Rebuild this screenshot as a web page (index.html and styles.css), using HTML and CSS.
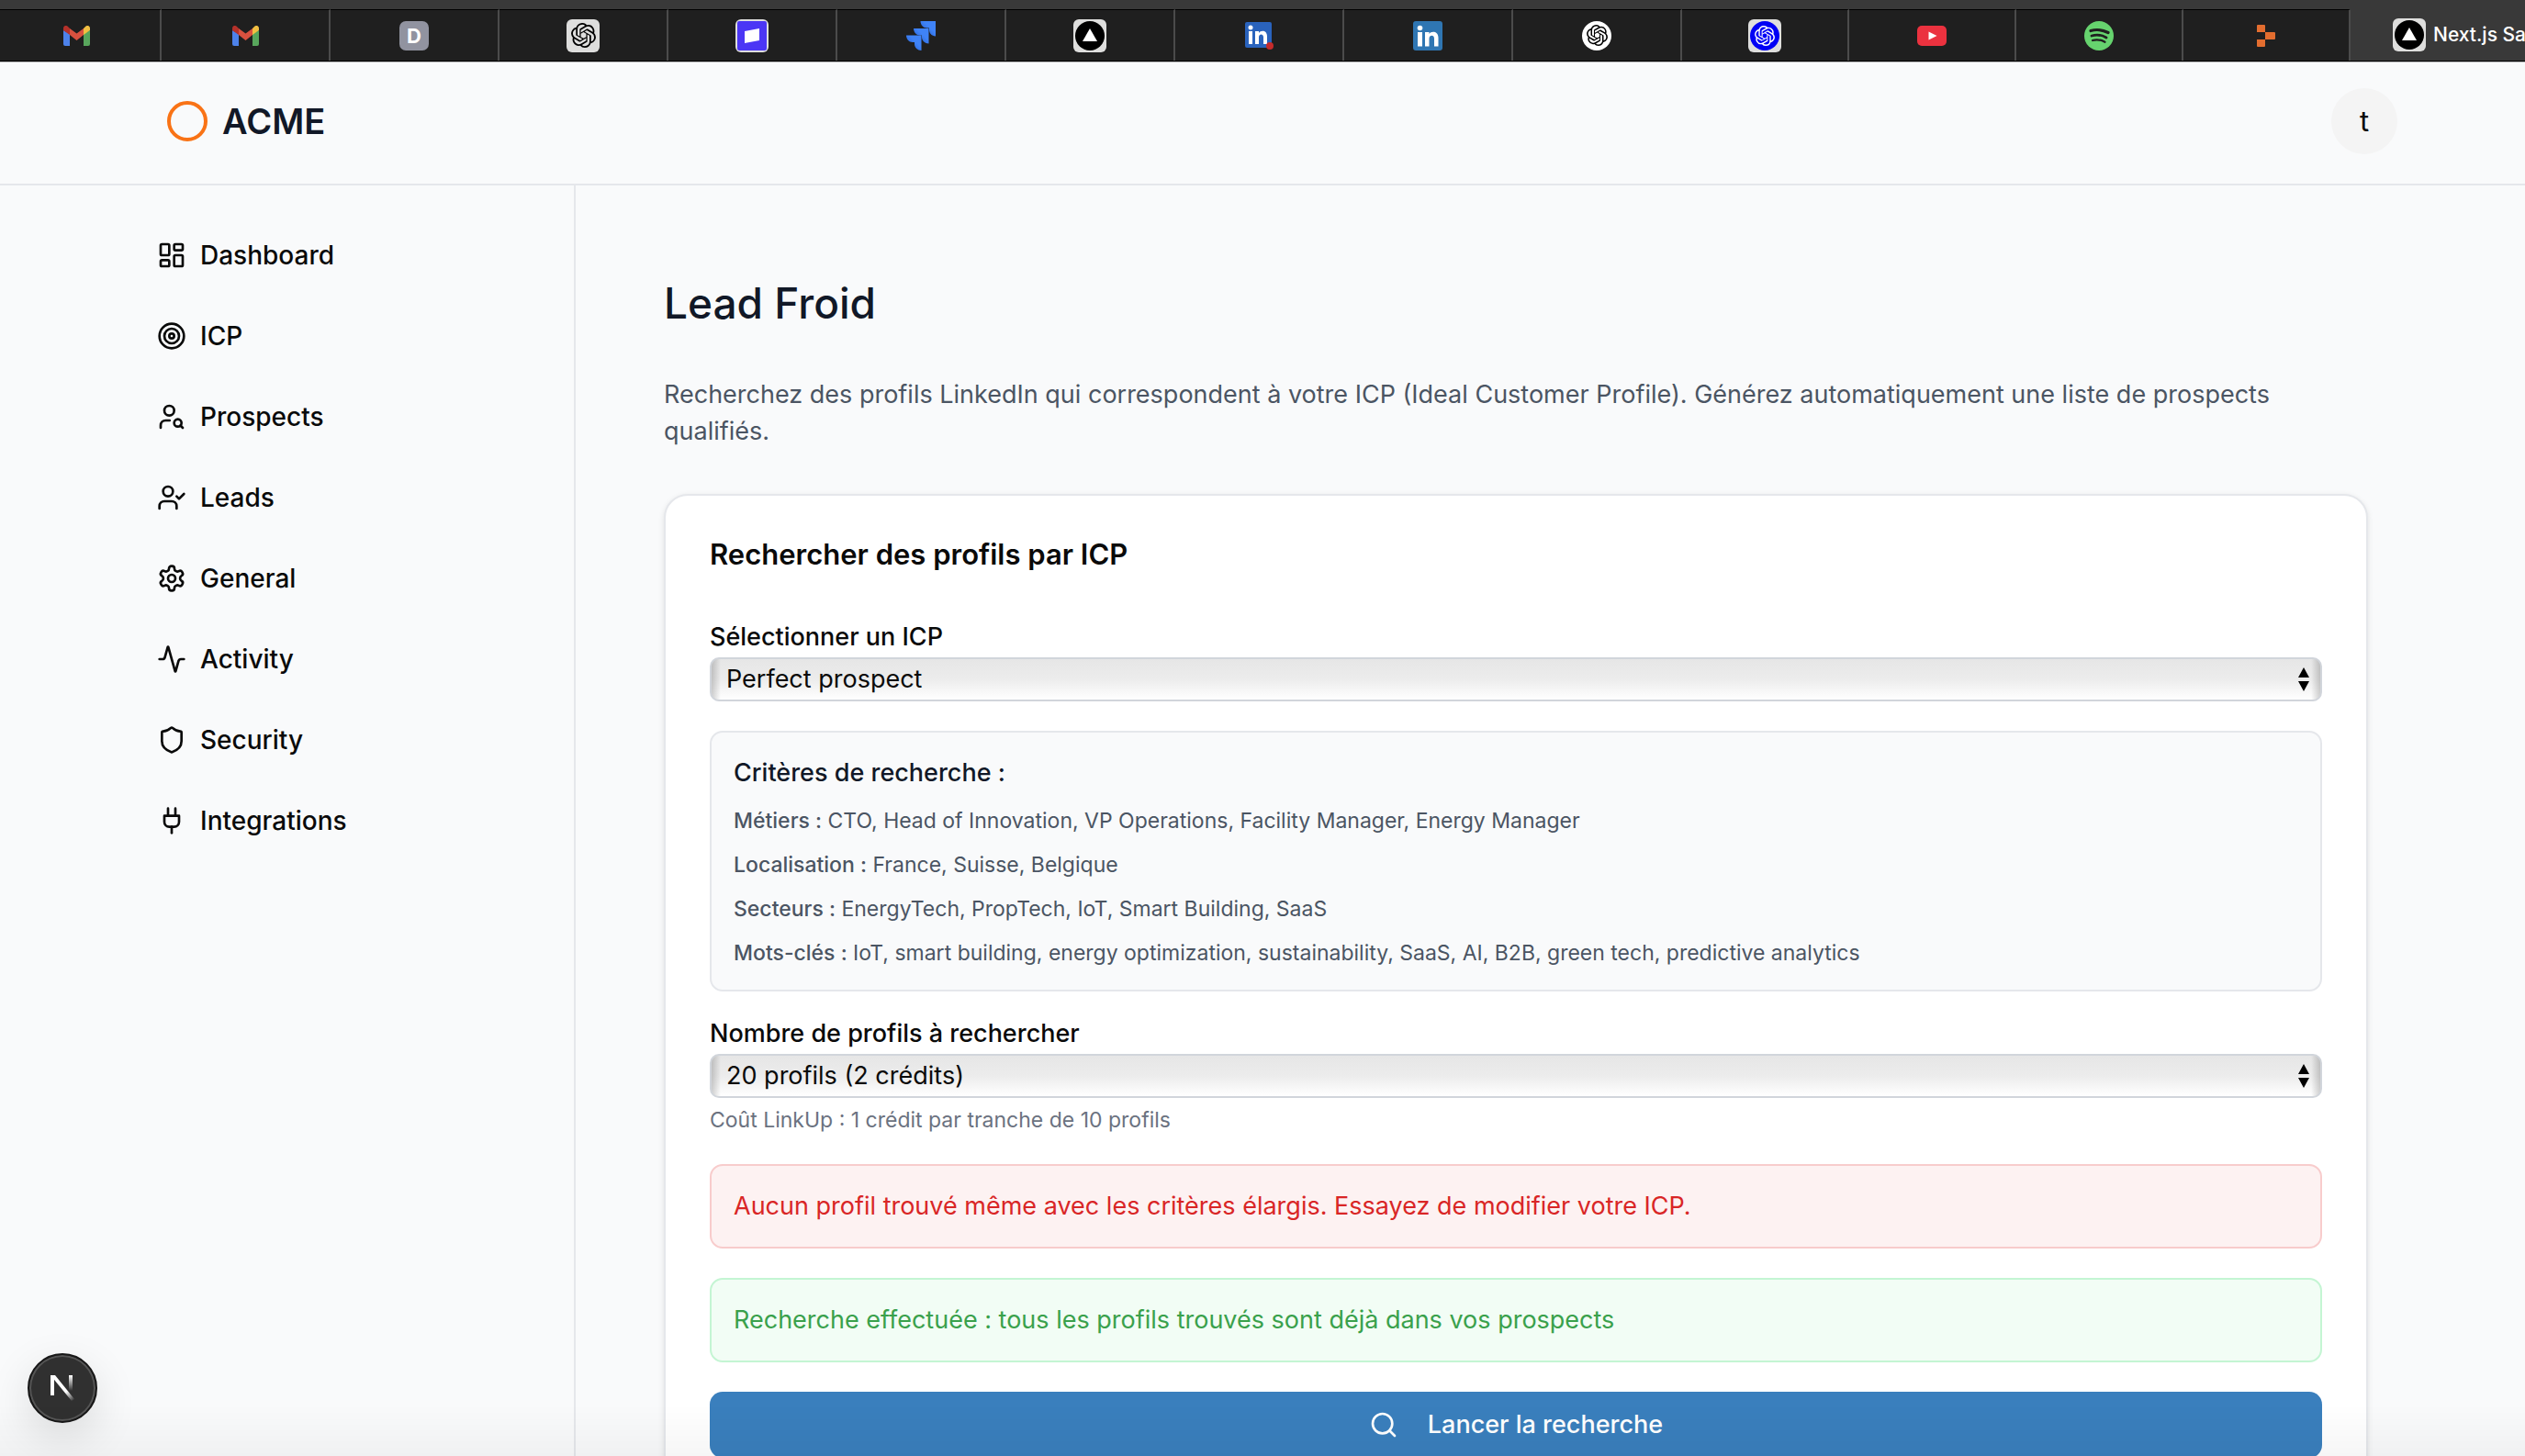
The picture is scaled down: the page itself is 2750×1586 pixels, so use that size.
FILE: index.html
```html
<!DOCTYPE html>
<html lang="fr">
<head>
<meta charset="utf-8">
<title>Lead Froid</title>
<meta name="viewport" content="width=device-width, initial-scale=1">
<link rel="stylesheet" href="styles.css">
</head>
<body>
<svg class="defs" aria-hidden="true">
  <defs>
    <symbol id="gmail" viewBox="0 0 29 22">
      <path fill="#4d82ea" d="M0 5v15a2 2 0 0 0 2 2h5V9z"/>
      <path fill="#58a65c" d="M29 5v15a2 2 0 0 1-2 2h-5V9z"/>
      <path fill="#f1bf42" d="M22 3v7l7-5V3c0-3-3-4-5-2z"/>
      <path fill="#b5312a" d="M7 3v7L0 5V3c0-3 3-4 5-2z"/>
      <path fill="#d9513f" d="M7 10V3l7.500 5.500L22 3v7l-7.500 6z"/>
    </symbol>
    <symbol id="knot" viewBox="0 0 24 24">
      <path fill="currentColor" d="M22.2819 9.8211a5.9847 5.9847 0 0 0-.5157-4.9108 6.0462 6.0462 0 0 0-6.5098-2.9A6.0651 6.0651 0 0 0 4.9807 4.1818a5.9847 5.9847 0 0 0-3.9977 2.9 6.0462 6.0462 0 0 0 .7427 7.0966 5.98 5.98 0 0 0 .511 4.9107 6.051 6.051 0 0 0 6.5146 2.9001A5.9847 5.9847 0 0 0 13.2599 24a6.0557 6.0557 0 0 0 5.7718-4.2058 5.9894 5.9894 0 0 0 3.9977-2.9001 6.0557 6.0557 0 0 0-.7475-7.0729zm-9.022 12.6081a4.4755 4.4755 0 0 1-2.8764-1.0408l.1419-.0804 4.7783-2.7582a.7948.7948 0 0 0 .3927-.6813v-6.7369l2.02 1.1686a.071.071 0 0 1 .038.052v5.5826a4.504 4.504 0 0 1-4.4945 4.4944zm-9.6607-4.1254a4.4708 4.4708 0 0 1-.5346-3.0137l.142.0852 4.783 2.7582a.7712.7712 0 0 0 .7806 0l5.8428-3.3685v2.3324a.0804.0804 0 0 1-.0332.0615L9.74 19.9502a4.4992 4.4992 0 0 1-6.1408-1.6464zM2.3408 7.8956a4.485 4.485 0 0 1 2.3655-1.9728V11.6a.7664.7664 0 0 0 .3879.6765l5.8144 3.3543-2.0201 1.1685a.0757.0757 0 0 1-.071 0l-4.8303-2.7865A4.504 4.504 0 0 1 2.3408 7.872zm16.5963 3.8558L13.1038 8.364 15.1192 7.2a.0757.0757 0 0 1 .071 0l4.8303 2.7913a4.4944 4.4944 0 0 1-.6765 8.1042v-5.6772a.79.79 0 0 0-.407-.667zm2.0107-3.0231l-.142-.0852-4.7735-2.7818a.7759.7759 0 0 0-.7854 0L9.409 9.2297V6.8974a.0662.0662 0 0 1 .0284-.0615l4.8303-2.7866a4.4992 4.4992 0 0 1 6.6802 4.66zM8.3065 12.863l-2.02-1.1638a.0804.0804 0 0 1-.038-.0567V6.0742a4.4992 4.4992 0 0 1 7.3757-3.4537l-.142.0805L8.704 5.459a.7948.7948 0 0 0-.3927.6813zm1.0976-2.3654l2.602-1.4998 2.6069 1.4998v2.9994l-2.5974 1.4997-2.6067-1.4997Z"/>
    </symbol>
    <symbol id="vercel" viewBox="0 0 36 36">
      <rect width="36" height="36" rx="6" fill="#dededd"/>
      <circle cx="18" cy="18" r="16" fill="#000"/>
      <path fill="#fff" d="M18 10l8 14H10z"/>
    </symbol>
    <linearGradient id="jira" x1="1" y1="0" x2="0" y2="1">
      <stop offset=".4" stop-color="#3f83f7"/><stop offset="1" stop-color="#1c54c8"/>
    </linearGradient>
    <linearGradient id="fade" x1="0" y1="0" x2="0" y2="1">
      <stop offset="0" stop-color="#fff"/><stop offset="1" stop-color="#fff" stop-opacity="0"/>
    </linearGradient>
    <linearGradient id="tail" gradientUnits="userSpaceOnUse" x1="17" y1="19" x2="25" y2="29">
      <stop offset="0" stop-color="#fff"/><stop offset="1" stop-color="#fff" stop-opacity="0"/>
    </linearGradient>
  </defs>
</svg>

<div class="browser">
  <div class="tabs">
    <div class="tab"><svg width="29" height="22"><use href="#gmail"/></svg></div>
    <div class="tab"><svg width="29" height="22"><use href="#gmail"/></svg></div>
    <div class="tab"><span class="letter">D</span></div>
    <div class="tab"><span class="tile"><svg width="27" height="27"><use href="#knot"/></svg></span></div>
    <div class="tab"><svg width="36" height="36" viewBox="0 0 36 36"><rect width="36" height="36" rx="6" fill="#dededd"/><rect x="2" y="2" width="32" height="32" rx="2" fill="#4b36f5"/><path fill="#fff" d="M10 13l16-3v13l-16 3z"/></svg></div>
    <div class="tab"><svg width="32" height="32" viewBox="0 0 32 32"><g fill="url(#jira)"><path d="M15.500 0H32v16.500c-4-.2-7-3-7-7V7.500h-2.500c-4 0-7-3.500-7-7.500z"/><path d="M8 8h16.500v16.500c-4-.2-7.500-3-7.500-7v-2h-2c-4 0-7-3.500-7-7.500z"/><path d="M0 15.500h16.500V32c-4-.2-7.500-3-7.500-7v-2H7c-4 0-7-3.500-7-7.500z"/></g></svg></div>
    <div class="tab"><svg width="36" height="36"><use href="#vercel"/></svg></div>
    <div class="tab"><svg width="32" height="30" viewBox="0 0 32 30"><rect x="1" width="29" height="28" rx="2" fill="#2a63bd"/><g fill="#fff"><circle cx="7" cy="6" r="2.500"/><path d="M5 10h4v14H5zM12 10h4v2c2-3.500 9-3.500 9 3.500V24h-4v-7.500c0-4-5-4-5 0V24h-4z"/></g><circle cx="28" cy="26" r="4" fill="#c52b2b"/></svg></div>
    <div class="tab"><svg width="32" height="32" viewBox="0 0 32 32"><rect width="32" height="32" rx="3" fill="#2f76b3"/><g fill="#fff"><circle cx="7.500" cy="7.500" r="2.800"/><path d="M5 12h5v15.500H5zM13 12h4.500v2c2-3.500 10-3.500 10 4v9.500H23V19c0-4.500-5.500-4-5.500 0v8.500H13z"/></g></svg></div>
    <div class="tab"><span class="round"><svg width="23" height="23"><use href="#knot"/></svg></span></div>
    <div class="tab narrow"><span class="tile"><span class="round blue"><svg width="22" height="22"><use href="#knot"/></svg></span></span></div>
    <div class="tab narrow"><svg width="32" height="22" viewBox="0 0 32 22"><rect width="32" height="22" rx="5" fill="#eb323f"/><path fill="#fff" d="M12.500 6.500l9 4.500-9 4.500z"/></svg></div>
    <div class="tab narrow"><svg width="32" height="32" viewBox="0 0 32 32"><circle cx="16" cy="16" r="16" fill="#66d36e"/><g fill="none" stroke="#1f1f1f" stroke-linecap="round"><path stroke-width="3.200" d="M7 10.500c6-1.700 13-1 19 2"/><path stroke-width="2.800" d="M8 16c5-1.500 11-1 16 2"/><path stroke-width="2.200" d="M9 21c4-1.200 9-.8 13.500 1.800"/></g></svg></div>
    <div class="tab narrow"><svg width="20" height="24" viewBox="0 0 20 24"><path fill="#e36d2f" d="M1 0h7a1 1 0 0 1 1 1v7H0V1a1 1 0 0 1 1-1zM9 8h10a1 1 0 0 1 1 1v6a1 1 0 0 1-1 1H9zM0 16h9v7a1 1 0 0 1-1 1H1a1 1 0 0 1-1-1z"/></svg></div>
    <div class="tab active"><svg width="36" height="36"><use href="#vercel"/></svg><span>Next.js Sa</span></div>
  </div>
</div>

<header class="header">
  <a class="brand" href="#"><svg width="48" height="48" viewBox="0 0 24 24" fill="none" stroke="#f97316" stroke-width="2"><circle cx="12" cy="12" r="10"/></svg><span>ACME</span></a>
  <button class="avatar" type="button">t</button>
</header>

<div class="layout">
  <nav class="sidebar">
    <a href="#"><svg class="icon" viewBox="0 0 24 24"><rect width="7" height="9" x="3" y="3" rx="1"/><rect width="7" height="5" x="14" y="3" rx="1"/><rect width="7" height="9" x="14" y="12" rx="1"/><rect width="7" height="5" x="3" y="16" rx="1"/></svg>Dashboard</a>
    <a href="#"><svg class="icon" viewBox="0 0 24 24"><circle cx="12" cy="12" r="10"/><circle cx="12" cy="12" r="6"/><circle cx="12" cy="12" r="2"/></svg>ICP</a>
    <a href="#"><svg class="icon" viewBox="0 0 24 24"><circle cx="10" cy="7" r="4"/><path d="M10.300 15H7a4 4 0 0 0-4 4v2"/><circle cx="17" cy="17" r="3"/><path d="m21 21-1.900-1.900"/></svg>Prospects</a>
    <a href="#"><svg class="icon" viewBox="0 0 24 24"><path d="m16 11 2 2 4-4"/><path d="M16 21v-2a4 4 0 0 0-4-4H6a4 4 0 0 0-4 4v2"/><circle cx="9" cy="7" r="4"/></svg>Leads</a>
    <a href="#"><svg class="icon" viewBox="0 0 24 24"><path d="M12.220 2h-.44a2 2 0 0 0-2 2v.18a2 2 0 0 1-1 1.730l-.43.25a2 2 0 0 1-2 0l-.15-.08a2 2 0 0 0-2.730.73l-.22.38a2 2 0 0 0 .73 2.730l.15.1a2 2 0 0 1 1 1.720v.51a2 2 0 0 1-1 1.740l-.15.09a2 2 0 0 0-.73 2.730l.22.38a2 2 0 0 0 2.730.73l.15-.08a2 2 0 0 1 2 0l.43.25a2 2 0 0 1 1 1.730V20a2 2 0 0 0 2 2h.44a2 2 0 0 0 2-2v-.18a2 2 0 0 1 1-1.730l.43-.25a2 2 0 0 1 2 0l.15.08a2 2 0 0 0 2.730-.73l.22-.39a2 2 0 0 0-.73-2.730l-.15-.08a2 2 0 0 1-1-1.740v-.5a2 2 0 0 1 1-1.740l.15-.09a2 2 0 0 0 .73-2.730l-.22-.38a2 2 0 0 0-2.730-.73l-.15.08a2 2 0 0 1-2 0l-.43-.25a2 2 0 0 1-1-1.730V4a2 2 0 0 0-2-2z"/><circle cx="12" cy="12" r="3"/></svg>General</a>
    <a href="#"><svg class="icon" viewBox="0 0 24 24"><path d="M22 12h-2.480a2 2 0 0 0-1.930 1.460l-2.350 8.360a.25.25 0 0 1-.48 0L9.240 2.180a.25.25 0 0 0-.48 0l-2.350 8.360A2 2 0 0 1 4.490 12H2"/></svg>Activity</a>
    <a href="#"><svg class="icon" viewBox="0 0 24 24"><path d="M20 13c0 5-3.500 7.500-7.660 8.950a1 1 0 0 1-.67-.01C7.500 20.500 4 18 4 13V6a1 1 0 0 1 1-1c2 0 4.500-1.200 6.240-2.720a1.170 1.170 0 0 1 1.520 0C14.510 3.810 17 5 19 5a1 1 0 0 1 1 1z"/></svg>Security</a>
    <a href="#"><svg class="icon" viewBox="0 0 24 24"><path d="M12 22v-5"/><path d="M9 8V2"/><path d="M15 8V2"/><path d="M18 8v5a4 4 0 0 1-4 4h-4a4 4 0 0 1-4-4V8Z"/></svg>Integrations</a>
  </nav>

  <main class="main">
    <h1>Lead Froid</h1>
    <p class="intro">Recherchez des profils LinkedIn qui correspondent à votre ICP (Ideal Customer Profile). Générez automatiquement une liste de prospects qualifiés.</p>

    <form class="card">
      <h2>Rechercher des profils par ICP</h2>

      <div class="field">
        <label for="icp">Sélectionner un ICP</label>
        <div class="select">
          <select id="icp"><option>Perfect prospect</option></select>
          <svg width="12" height="26" viewBox="0 0 12 26" aria-hidden="true"><path d="M6 0l6 11H0zM6 26l6-11H0z"/></svg>
        </div>
      </div>

      <section class="criteria">
        <h3>Critères de recherche :</h3>
        <p><strong>Métiers :</strong> CTO, Head of Innovation, VP Operations, Facility Manager, Energy Manager</p>
        <p><strong>Localisation :</strong> France, Suisse, Belgique</p>
        <p><strong>Secteurs :</strong> EnergyTech, PropTech, IoT, Smart Building, SaaS</p>
        <p><strong>Mots-clés :</strong> IoT, smart building, energy optimization, sustainability, SaaS, AI, B2B, green tech, predictive analytics</p>
      </section>

      <div class="field">
        <label for="count">Nombre de profils à rechercher</label>
        <div class="select">
          <select id="count"><option>20 profils (2 crédits)</option></select>
          <svg width="12" height="26" viewBox="0 0 12 26" aria-hidden="true"><path d="M6 0l6 11H0zM6 26l6-11H0z"/></svg>
        </div>
        <p class="hint">Coût LinkUp : 1 crédit par tranche de 10 profils</p>
      </div>

      <p class="alert error">Aucun profil trouvé même avec les critères élargis. Essayez de modifier votre ICP.</p>
      <p class="alert success">Recherche effectuée : tous les profils trouvés sont déjà dans vos prospects</p>

      <button class="submit" type="button"><svg class="icon" viewBox="0 0 24 24"><circle cx="11" cy="11" r="8"/><path d="m21 21-4.300-4.300"/></svg>Lancer la recherche</button>
    </form>
  </main>
</div>

<button class="devtools" type="button" aria-label="Next.js">
  <svg width="26" height="30" viewBox="0 0 26 30"><path fill="#fff" d="M0 1h4v22H0z"/><path fill="url(#tail)" d="M0 1h5l21 26-3 2z"/><path fill="url(#fade)" d="M20 1h4v17h-4z"/></svg>
</button>
</body>
</html>
```
FILE: styles.css
```css
* {
  box-sizing: border-box;
}

body {
  margin: 0;
  height: 100vh;
  overflow: hidden;
  display: flex;
  flex-direction: column;
  background: #f9fafb;
  color: #0a0a0a;
  font-family: Inter, "Noto Sans", sans-serif;
  font-size: 27px;
  line-height: 40px;
}

body::after {
  content: "";
  position: fixed;
  inset: auto 0 0;
  height: 56px;
  background: linear-gradient(transparent, rgba(0, 0, 0, .035));
  pointer-events: none;
}

h1, h2, h3, p {
  margin: 0;
}

a {
  color: inherit;
  text-decoration: none;
}

button, select {
  font: inherit;
  color: inherit;
  border: 0;
  margin: 0;
}

.defs {
  position: absolute;
  width: 0;
  height: 0;
}

.icon {
  width: 32px;
  height: 32px;
  flex: none;
  fill: none;
  stroke: currentColor;
  stroke-width: 2;
  stroke-linecap: round;
  stroke-linejoin: round;
}

/* Browser tab strip */
.browser {
  flex: none;
  padding-top: 10px;
  background: #393939;
  border-bottom: 1px solid #b4b5b6;
  overflow: hidden;
}

.tabs {
  display: flex;
  height: 57px;
  margin-left: -8px;
  border-bottom: 1px solid #000;
}

.tab {
  flex: none;
  display: flex;
  align-items: center;
  justify-content: center;
  width: 184px;
  border-top: 1px solid #000;
  border-right: 2px solid #4b4b4b;
  background: #1f1f1f;
}

.tab.narrow {
  width: 182px;
}

.tab.active {
  flex: 1;
  justify-content: flex-start;
  gap: 8px;
  padding-left: 46px;
  border: 0;
  background: #393939;
  color: #fff;
  font-size: 21px;
  font-weight: 500;
  white-space: nowrap;
}

.tab.active svg {
  flex: none;
}

.letter, .tile, .round {
  display: flex;
  align-items: center;
  justify-content: center;
  width: 32px;
  height: 32px;
}

.letter {
  border-radius: 7px;
  background: #9193a0;
  color: #fff;
  font-size: 22px;
  font-weight: 700;
}

.tile {
  width: 36px;
  height: 36px;
  border-radius: 6px;
  background: #dededd;
  color: #000;
}

.round {
  border-radius: 50%;
  background: #fff;
  color: #000;
}

.round.blue {
  background: #0000f5;
  color: #fff;
}

/* App header */
.header {
  flex: none;
  display: flex;
  align-items: center;
  justify-content: space-between;
  height: 134px;
  padding: 0 139px 4px 180px;
  border-bottom: 2px solid #e5e7eb;
}

.brand {
  display: flex;
  align-items: center;
  gap: 14px;
  color: #111827;
  font-size: 38px;
  font-weight: 600;
}

.avatar {
  width: 72px;
  height: 72px;
  padding: 0;
  border-radius: 50%;
  background: #f4f4f4;
  font-size: 31px;
}

/* Layout */
.layout {
  flex: 1;
  display: flex;
  min-height: 0;
}

.sidebar {
  flex: none;
  width: 627px;
  padding: 32px 0 0 171px;
  border-right: 2px solid #e5e7eb;
  font-size: 28px;
  font-weight: 500;
}

.sidebar a {
  display: flex;
  align-items: center;
  gap: 15px;
  height: 88px;
}

.main {
  flex: 1;
  min-width: 0;
  padding: 96px 171px 0 96px;
}

h1 {
  color: #111827;
  font-size: 46px;
  line-height: 64px;
  font-weight: 500;
}

.intro {
  margin: 48px 0;
  color: #4b5563;
}

.card {
  display: flex;
  flex-direction: column;
  gap: 32px;
  padding: 48px;
  border: 2px solid #e5e7eb;
  border-radius: 26px;
  background: #fff;
  box-shadow: 0 2px 6px rgba(0, 0, 0, .1);
}

.card h2 {
  margin-bottom: 28px;
  font-size: 31px;
  line-height: 32px;
  font-weight: 600;
}

.field label {
  display: block;
  margin-bottom: 8px;
  line-height: 28px;
  font-weight: 500;
}

.select {
  display: grid;
  align-items: center;
}

.select > * {
  grid-area: 1 / 1;
}

.select > svg {
  justify-self: end;
  margin-right: 14px;
  pointer-events: none;
}

.select select {
  appearance: none;
  width: 100%;
  height: 48px;
  padding: 0 16px;
  border: 2px solid #d1d5db;
  border-radius: 10px;
  background:
    linear-gradient(90deg, rgba(0, 0, 0, .18), transparent 10px, transparent calc(100% - 10px), rgba(0, 0, 0, .18)),
    linear-gradient(#e6e6e6, #ececec 50%, #fff);
}

.criteria {
  display: flex;
  flex-direction: column;
  gap: 16px;
  padding: 24px;
  border: 2px solid #e5e7eb;
  border-radius: 14px;
  background: #f9fafb;
  color: #4b5563;
  font-size: 23px;
  line-height: 32px;
}

.criteria h3 {
  color: #111827;
  font-size: 27px;
  line-height: 40px;
  font-weight: 500;
}

.criteria strong {
  font-weight: 500;
}

.hint {
  margin-top: 8px;
  color: #6b7280;
  font-size: 23px;
  line-height: 32px;
}

.alert {
  padding: 24px;
  border: 2px solid;
  border-radius: 14px;
}

.error {
  border-color: #f8cccc;
  background: #fdf2f2;
  color: #d92626;
}

.success {
  border-color: #c4f5d3;
  background: #f2fdf5;
  color: #3aa14c;
}

.submit {
  display: flex;
  align-items: center;
  justify-content: center;
  gap: 32px;
  height: 72px;
  border-radius: 14px;
  background: #3a7fbd;
  color: #fff;
  font-weight: 500;
}

/* Floating dev indicator */
.devtools {
  position: fixed;
  left: 30px;
  bottom: 36px;
  display: flex;
  align-items: center;
  justify-content: center;
  width: 76px;
  height: 76px;
  padding: 0;
  border: 2px solid #171717;
  border-radius: 50%;
  background: #303030;
  box-shadow: inset 0 0 0 2px #555, 0 16px 48px rgba(0, 0, 0, .12);
}
```
